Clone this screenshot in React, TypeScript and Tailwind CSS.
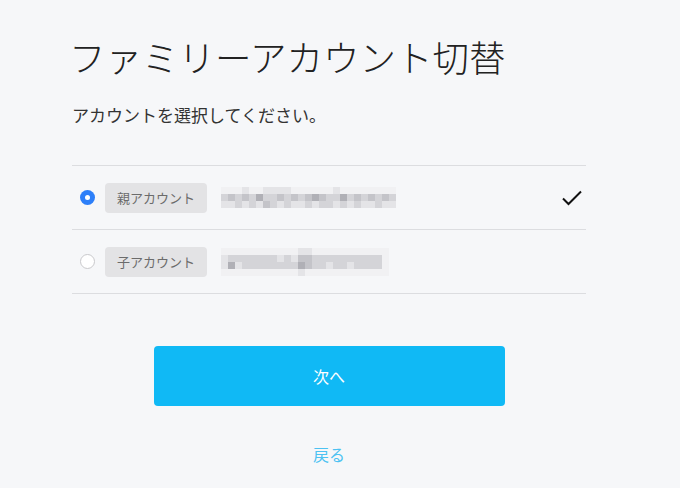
import React from 'react';

const font = { fontFamily: '"Noto Sans CJK JP", "Noto Sans", sans-serif' };

const shades = ['bg-[#f1f1f3]', 'bg-[#e4e4e7]', 'bg-[#d4d4d8]', 'bg-[#c4c4c9]', 'bg-[#b0b0b6]'];

// pixelated (mosaic) email placeholders
const mosaicA = [
    '0001001111000000100000000',
    '2323242232323432242323232',
    '1121213212112122121211211',
];
const mosaicB = [
    '000000000001100000000000',
    '122222221213322222222220',
    '141222222224322122122220',
    '000000000001000000000000',
];

function Mosaic({ rows }: { rows: string[] }) {
    return (
        <div className="flex flex-col">
            {rows.map((row, i) => (
                <div key={i} className="flex">
                    {row.split('').map((c, j) => (
                        <div key={j} className={`h-[7px] w-[7px] ${shades[Number(c)]}`} />
                    ))}
                </div>
            ))}
        </div>
    );
}

function Radio({ checked }: { checked: boolean }) {
    return checked ? (
        <span className="flex h-[15px] w-[15px] items-center justify-center rounded-full bg-[#2d7ff9]">
            <span className="h-[5px] w-[5px] rounded-full bg-white" />
        </span>
    ) : (
        <span className="h-[15px] w-[15px] rounded-full border border-[#c9c9cc] bg-white" />
    );
}

function AccountRow({ label, checked, rows }: { label: string; checked: boolean; rows: string[] }) {
    return (
        <div className="flex h-[64px] items-center border-b border-[#dcdde0] pl-2 pr-[3px]">
            <Radio checked={checked} />
            <span className="ml-[10px] flex h-[30px] items-center rounded-[4px] bg-[#e3e3e5] px-3 text-[13px] text-[#6b6b6b]">
                {label}
            </span>
            <div className="ml-[14px]">
                <Mosaic rows={rows} />
            </div>
            <div className="flex-1" />
            {checked ? (
                <svg width="22" height="18" viewBox="0 0 22 18" fill="none">
                    <path d="M2 9.5 L7.5 15 L20 2.5" stroke="#111" strokeWidth="2" />
                </svg>
            ) : null}
        </div>
    );
}

export default function App() {
    return (
        <div className="h-[488px] w-[680px] overflow-hidden bg-[#f6f7f9] text-[#222]" style={font}>
            <div className="w-[586px] pl-[72px] pt-[30px]">
                <h1 className="-ml-[3px] text-[36.5px] font-light leading-[54px]">ファミリーアカウント切替</h1>
                <p className="mt-[19px] text-[17px] leading-[24px] text-[#333]">アカウントを選択してください。</p>

                <div className="mt-[38px] border-t border-[#dcdde0]">
                    <AccountRow label="親アカウント" checked rows={mosaicA} />
                    <AccountRow label="子アカウント" checked={false} rows={mosaicB} />
                </div>

                <div className="mt-[52px] flex flex-col items-center">
                    <button
                        type="button"
                        className="flex h-[60px] w-[351px] items-center justify-center rounded-[4px] bg-[#10b9f5] text-[16px] text-white"
                    >
                        次へ
                    </button>
                    <button type="button" className="mt-[36px] text-[16px] leading-[24px] text-[#4cc2f2]">
                        戻る
                    </button>
                </div>
            </div>
        </div>
    );
}
